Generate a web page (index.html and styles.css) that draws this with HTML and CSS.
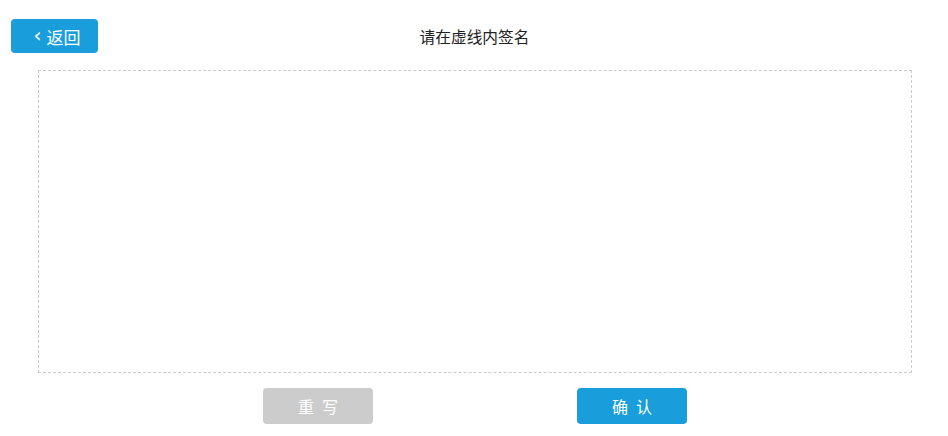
FILE: index.html
```html
<!DOCTYPE html>
<html lang="zh-CN">
<head>
  <meta charset="UTF-8">
  <meta name="viewport" content="width=device-width, initial-scale=1.0">
  <title>签名</title>
  <link rel="stylesheet" href="styles.css">
</head>
<body>

<div class="header">
  <button class="back-btn" type="button"><span class="chevron">&lsaquo;</span>返回</button>
  <h1 class="title">请在虚线内签名</h1>
  <span></span>
</div>

<div class="sign-area"></div>

<div class="actions">
  <button class="btn btn-reset" type="button">重写</button>
  <button class="btn btn-ok" type="button">确认</button>
</div>

</body>
</html>
```

FILE: styles.css
```css
body {
  margin: 0;
  font-family: 'Noto Sans CJK SC', 'Noto Sans', sans-serif;
  background-color: #fff;
}

.header {
  display: grid;
  grid-template-columns: 1fr auto 1fr;
  align-items: center;
  padding: 19px 0 0 11px;
}

.back-btn {
  justify-self: start;
  width: 87px;
  height: 34px;
  border: none;
  border-radius: 4px;
  background-color: #1a9edb;
  color: #fff;
  font-family: inherit;
  font-size: 17px;
  padding: 0 0 0 5px;
  display: flex;
  align-items: center;
  justify-content: center;
  gap: 5px;
}

.chevron {
  font-family: 'DejaVu Sans', sans-serif;
  font-size: 20px;
  line-height: 1;
  margin-top: -3px;
}

.title {
  margin: 0 10px 0 0;
  font-size: 15.7px;
  font-weight: normal;
  color: #222;
}

.sign-area {
  height: 301px;
  margin: 17px 36px 0 38px;
  border: 1px dashed #ccc;
}

.actions {
  display: flex;
  justify-content: center;
  gap: 204px;
  margin-top: 15px;
  padding-left: 2px;
}

.btn {
  width: 110px;
  height: 36px;
  border: none;
  border-radius: 4px;
  color: #fff;
  font-family: inherit;
  font-size: 16px;
  letter-spacing: 8px;
  text-indent: 8px;
  padding: 0;
}

.btn-reset {
  background-color: #cccccc;
}

.btn-ok {
  background-color: #1a9edb;
}
```
